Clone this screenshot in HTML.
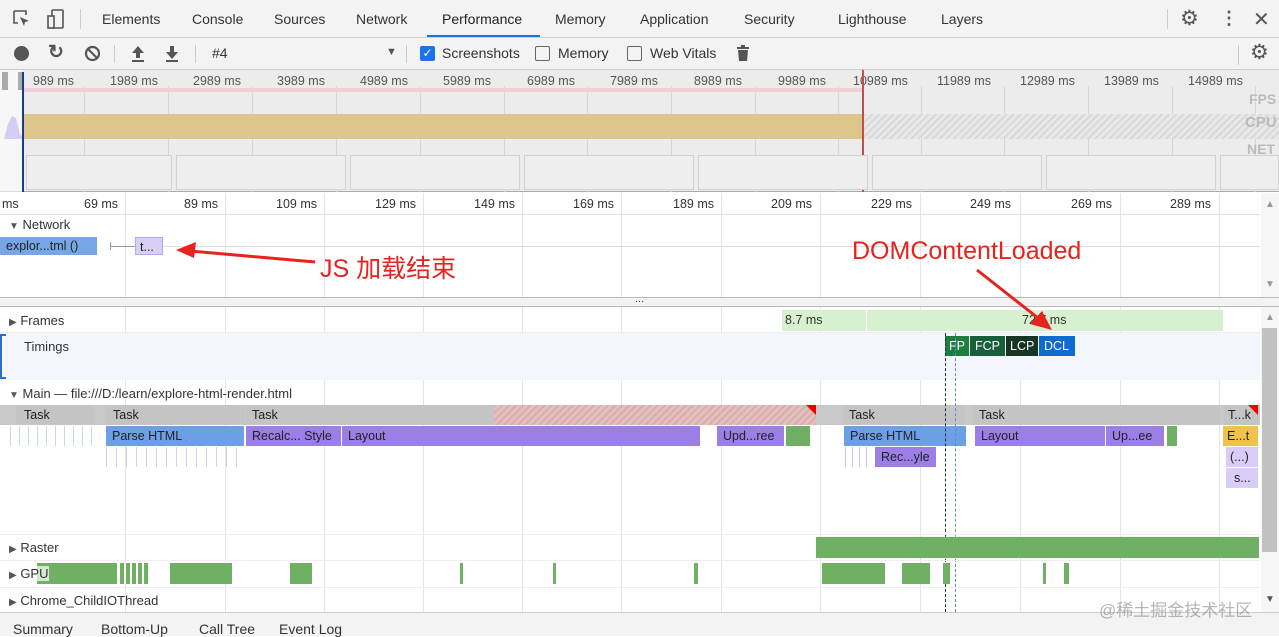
<!DOCTYPE html>
<html><head><meta charset="utf-8"><style>
*{box-sizing:border-box;margin:0;padding:0}
body{width:1279px;height:636px;overflow:hidden;background:#fff;font-family:"Liberation Sans",sans-serif;font-size:13px;color:#333;position:relative}
.a{position:absolute}
.t{position:absolute;white-space:nowrap}
.bar{position:absolute;height:20px;font-size:12.5px;line-height:20px;padding-left:6px;color:#222;overflow:hidden;white-space:nowrap}
.g{position:absolute;width:1px;background:#e4e4e4}
.og{position:absolute;width:1px;background:#d6d6d6;top:86px;height:106px}
.ol{position:absolute;top:74px;font-size:12.5px;color:#555}
.rl{position:absolute;top:197px;font-size:12.5px;color:#333}
.tri{font-size:10px;color:#555}
</style></head><body>
<!-- tab bar -->
<div class="a" style="left:0;top:0;width:1279px;height:38px;background:#f3f3f3;border-bottom:1px solid #d0d0d0"></div>
<svg class="a" style="left:12px;top:9px" width="20" height="20" viewBox="0 0 20 20"><path d="M2 2h12v4M2 2v12h4" fill="none" stroke="#555" stroke-width="1.6"/><path d="M8 8l9 4-4 1-1 4z" fill="#555"/></svg>
<svg class="a" style="left:45px;top:8px" width="22" height="22" viewBox="0 0 22 22"><rect x="7" y="2" width="11" height="18" rx="1" fill="none" stroke="#555" stroke-width="1.6"/><rect x="3" y="8" width="6" height="12" fill="#f3f3f3" stroke="#555" stroke-width="1.6"/></svg>
<div class="a" style="left:80px;top:9px;width:1px;height:20px;background:#ccc"></div>
<div class="t" style="left:102px;top:11px;font-size:14px">Elements</div>
<div class="t" style="left:192px;top:11px;font-size:14px">Console</div>
<div class="t" style="left:274px;top:11px;font-size:14px">Sources</div>
<div class="t" style="left:356px;top:11px;font-size:14px">Network</div>
<div class="t" style="left:442px;top:11px;font-size:14px;color:#222">Performance</div>
<div class="a" style="left:427px;top:35px;width:113px;height:2px;background:#1a73e8"></div>
<div class="t" style="left:555px;top:11px;font-size:14px">Memory</div>
<div class="t" style="left:640px;top:11px;font-size:14px">Application</div>
<div class="t" style="left:744px;top:11px;font-size:14px">Security</div>
<div class="t" style="left:838px;top:11px;font-size:14px">Lighthouse</div>
<div class="t" style="left:941px;top:11px;font-size:14px">Layers</div>
<div class="a" style="left:1167px;top:9px;width:1px;height:20px;background:#ccc"></div>
<div class="t" style="left:1180px;top:6px;font-size:21px;color:#555">⚙</div>
<div class="t" style="left:1220px;top:8px;font-size:18px;color:#555;font-weight:bold">⋮</div>
<div class="t" style="left:1253px;top:7px;font-size:20px;color:#555">✕</div>
<!-- toolbar -->
<div class="a" style="left:0;top:38px;width:1279px;height:32px;background:#f3f3f3;border-bottom:1px solid #ccc"></div>
<div class="a" style="left:14px;top:46px;width:15px;height:15px;border-radius:50%;background:#555"></div>
<div class="t" style="left:48px;top:41px;font-size:19px;color:#555;font-weight:bold">↻</div>
<svg class="a" style="left:84px;top:45px" width="17" height="17"><circle cx="8.5" cy="8.5" r="6.5" fill="none" stroke="#555" stroke-width="2.2"/><path d="M4 4l9 9" stroke="#555" stroke-width="2.2"/></svg>
<div class="a" style="left:114px;top:45px;width:1px;height:18px;background:#ccc"></div>
<svg class="a" style="left:130px;top:45px" width="16" height="18"><path d="M8 1l6 7H10v5H6V8H2z" fill="#555"/><rect x="2" y="15" width="12" height="2" fill="#555"/></svg>
<svg class="a" style="left:164px;top:45px" width="16" height="18"><path d="M8 14l6-7H10V1H6v6H2z" fill="#555"/><rect x="2" y="15" width="12" height="2" fill="#555"/></svg>
<div class="a" style="left:195px;top:45px;width:1px;height:18px;background:#ccc"></div>
<div class="t" style="left:212px;top:45px;font-size:14px">#4</div>
<div class="t" style="left:386px;top:46px;font-size:11px;color:#555">▼</div>
<div class="a" style="left:406px;top:45px;width:1px;height:18px;background:#ccc"></div>
<div class="a" style="left:420px;top:46px;width:15px;height:15px;border-radius:2px;background:#1a73e8;color:#fff;font-size:12px;line-height:15px;text-align:center">✓</div>
<div class="t" style="left:442px;top:45px;font-size:14px">Screenshots</div>
<div class="a" style="left:535px;top:46px;width:15px;height:15px;border-radius:2px;border:1.5px solid #666"></div>
<div class="t" style="left:558px;top:45px;font-size:14px">Memory</div>
<div class="a" style="left:627px;top:46px;width:15px;height:15px;border-radius:2px;border:1.5px solid #666"></div>
<div class="t" style="left:650px;top:45px;font-size:14px">Web Vitals</div>
<svg class="a" style="left:736px;top:44px" width="14" height="18"><rect x="1" y="3" width="12" height="2" fill="#555"/><rect x="5" y="1" width="4" height="2" fill="#555"/><path d="M2 6h10l-1 11H3z" fill="#555"/></svg>
<div class="a" style="left:1238px;top:45px;width:1px;height:20px;background:#ccc"></div>
<div class="t" style="left:1250px;top:40px;font-size:21px;color:#555">⚙</div>
<!-- overview -->
<div class="a" style="left:0;top:70px;width:1279px;height:122px;background:#ececec;border-bottom:1px solid #aaa"></div>
<div class="og" style="left:84px"></div><div class="og" style="left:168px"></div><div class="og" style="left:252px"></div><div class="og" style="left:336px"></div><div class="og" style="left:420px"></div><div class="og" style="left:504px"></div><div class="og" style="left:587px"></div><div class="og" style="left:671px"></div><div class="og" style="left:755px"></div><div class="og" style="left:838px"></div><div class="og" style="left:921px"></div><div class="og" style="left:1004px"></div><div class="og" style="left:1088px"></div><div class="og" style="left:1172px"></div><div class="og" style="left:1255px"></div>
<div class="ol" style="left:33px">989 ms</div><div class="ol" style="left:110px">1989 ms</div><div class="ol" style="left:193px">2989 ms</div><div class="ol" style="left:277px">3989 ms</div><div class="ol" style="left:360px">4989 ms</div><div class="ol" style="left:443px">5989 ms</div><div class="ol" style="left:527px">6989 ms</div><div class="ol" style="left:610px">7989 ms</div><div class="ol" style="left:694px">8989 ms</div><div class="ol" style="left:778px">9989 ms</div><div class="ol" style="left:853px">10989 ms</div><div class="ol" style="left:937px">11989 ms</div><div class="ol" style="left:1020px">12989 ms</div><div class="ol" style="left:1104px">13989 ms</div><div class="ol" style="left:1188px">14989 ms</div>
<div class="a" style="left:22px;top:88px;width:840px;height:4px;background:#f0cfd4"></div>
<div class="a" style="left:22px;top:114px;width:840px;height:25px;background:#dcc68c"></div>
<div class="a" style="left:864px;top:114px;width:415px;height:25px;background:repeating-linear-gradient(135deg,#d8d8d8 0 2px,#e8e8e8 2px 5px)"></div>
<svg class="a" style="left:4px;top:114px" width="20" height="25"><path d="M0 25L4 10 8 2 12 4 16 20 20 25z" fill="#9b7fe6"/></svg>
<div class="a" style="left:0;top:70px;width:22px;height:122px;background:rgba(255,255,255,.6)"></div>
<div class="a" style="left:2px;top:72px;width:6px;height:18px;background:#aaa"></div>
<div class="a" style="left:18px;top:72px;width:6px;height:18px;background:#aaa"></div>
<div class="a" style="left:22px;top:72px;width:2px;height:120px;background:#1a3b8a"></div>
<div class="a" style="left:862px;top:70px;width:2px;height:122px;background:#c0504d"></div>
<div class="t" style="left:1249px;top:91px;font-size:14px;font-weight:bold;color:#bbb">FPS</div>
<div class="t" style="left:1245px;top:114px;font-size:15px;font-weight:bold;color:#bbb">CPU</div>
<div class="t" style="left:1247px;top:141px;font-size:14px;font-weight:bold;color:#bbb">NET</div>
<div class="a" style="left:26px;top:155px;width:146px;height:35px;border:1px solid #d2d2d2;background:#eee"></div>
<div class="a" style="left:176px;top:155px;width:170px;height:35px;border:1px solid #d2d2d2;background:#eee"></div>
<div class="a" style="left:350px;top:155px;width:170px;height:35px;border:1px solid #d2d2d2;background:#eee"></div>
<div class="a" style="left:524px;top:155px;width:170px;height:35px;border:1px solid #d2d2d2;background:#eee"></div>
<div class="a" style="left:698px;top:155px;width:170px;height:35px;border:1px solid #d2d2d2;background:#eee"></div>
<div class="a" style="left:872px;top:155px;width:170px;height:35px;border:1px solid #d2d2d2;background:#eee"></div>
<div class="a" style="left:1046px;top:155px;width:170px;height:35px;border:1px solid #d2d2d2;background:#eee"></div>
<div class="a" style="left:1220px;top:155px;width:59px;height:35px;border:1px solid #d2d2d2;background:#eee"></div>
<!-- grid lines detail -->
<div class="g" style="left:125px;top:193px;height:104px"></div><div class="g" style="left:225px;top:193px;height:104px"></div><div class="g" style="left:324px;top:193px;height:104px"></div><div class="g" style="left:423px;top:193px;height:104px"></div><div class="g" style="left:522px;top:193px;height:104px"></div><div class="g" style="left:621px;top:193px;height:104px"></div><div class="g" style="left:721px;top:193px;height:104px"></div><div class="g" style="left:820px;top:193px;height:104px"></div><div class="g" style="left:920px;top:193px;height:104px"></div><div class="g" style="left:1020px;top:193px;height:104px"></div><div class="g" style="left:1120px;top:193px;height:104px"></div><div class="g" style="left:1219px;top:193px;height:104px"></div>
<div class="a" style="left:0;top:214px;width:1260px;height:1px;background:#e0e0e0"></div>
<div class="rl" style="left:2px">ms</div><div class="rl" style="left:84px">69 ms</div><div class="rl" style="left:184px">89 ms</div><div class="rl" style="left:276px">109 ms</div><div class="rl" style="left:375px">129 ms</div><div class="rl" style="left:474px">149 ms</div><div class="rl" style="left:573px">169 ms</div><div class="rl" style="left:673px">189 ms</div><div class="rl" style="left:771px">209 ms</div><div class="rl" style="left:871px">229 ms</div><div class="rl" style="left:970px">249 ms</div><div class="rl" style="left:1071px">269 ms</div><div class="rl" style="left:1170px">289 ms</div>
<div class="t" style="left:9px;top:217px;font-size:13px"><span class="tri">▼</span> Network</div>
<div class="bar" style="left:0;top:237px;width:97px;height:18px;line-height:18px;background:#76a6e6;padding-left:6px">explor...tml ()</div>
<div class="a" style="left:110px;top:246px;width:25px;height:1px;background:#999"></div>
<div class="a" style="left:110px;top:242px;width:1px;height:8px;background:#999"></div>
<div class="bar" style="left:135px;top:237px;width:28px;height:18px;line-height:18px;background:#d8cff6;border:1px solid #b6a6ee;padding-left:4px">t...</div>
<div class="a" style="left:163px;top:246px;width:1097px;height:1px;background:#ddd"></div>
<div class="a" style="left:1261px;top:193px;width:18px;height:104px;background:#f6f6f6"></div>
<div class="t" style="left:1265px;top:199px;font-size:10px;color:#999">▲</div>
<div class="t" style="left:1265px;top:279px;font-size:10px;color:#999">▼</div>
<!-- splitter -->
<div class="a" style="left:0;top:297px;width:1279px;height:10px;background:#f3f3f3;border-top:1px solid #bbb;border-bottom:1px solid #bbb"></div>
<div class="t" style="left:635px;top:293px;font-size:11px;color:#333">...</div>
<!-- flame grid -->
<div class="g" style="left:125px;top:307px;height:305px"></div><div class="g" style="left:225px;top:307px;height:305px"></div><div class="g" style="left:324px;top:307px;height:305px"></div><div class="g" style="left:423px;top:307px;height:305px"></div><div class="g" style="left:522px;top:307px;height:305px"></div><div class="g" style="left:621px;top:307px;height:305px"></div><div class="g" style="left:721px;top:307px;height:305px"></div><div class="g" style="left:820px;top:307px;height:305px"></div><div class="g" style="left:920px;top:307px;height:305px"></div><div class="g" style="left:1020px;top:307px;height:305px"></div><div class="g" style="left:1120px;top:307px;height:305px"></div><div class="g" style="left:1219px;top:307px;height:305px"></div>
<!-- frames -->
<div class="t" style="left:9px;top:313px"><span class="tri">▶</span> Frames</div>
<div class="a" style="left:782px;top:310px;width:84px;height:21px;background:#d6f0d0"></div>
<div class="a" style="left:867px;top:310px;width:356px;height:21px;background:#d6f0d0"></div>
<div class="t" style="left:785px;top:313px;font-size:12.5px">8.7 ms</div>
<div class="t" style="left:1022px;top:313px;font-size:12.5px">72.7 ms</div>
<div class="a" style="left:0;top:332px;width:1260px;height:1px;background:#eee"></div>
<!-- timings -->
<div class="a" style="left:0;top:333px;width:1260px;height:47px;background:#f3f7fd"></div>
<div class="a" style="left:0;top:334px;width:6px;height:45px;border:2px solid #2f6cc6;border-right:none"></div>
<div class="t" style="left:24px;top:339px">Timings</div>
<div class="bar" style="left:945px;top:336px;width:24px;background:#1e7e3e;color:#fff;padding-left:4px">FP</div>
<div class="bar" style="left:970px;top:336px;width:35px;background:#17603a;color:#fff;padding-left:5px">FCP</div>
<div class="bar" style="left:1006px;top:336px;width:32px;background:#183424;color:#fff;padding-left:4px">LCP</div>
<div class="bar" style="left:1039px;top:336px;width:36px;background:#0c6ccf;color:#fff;padding-left:5px">DCL</div>
<!-- main -->
<div class="t" style="left:9px;top:386px"><span class="tri">▼</span> Main — file:///D:/learn/explore-html-render.html</div>
<div class="a" style="left:0;top:405px;width:1260px;height:20px;background:#c8c8c8"></div>
<div class="bar" style="left:16px;top:405px;width:78px;background:#c4c4c4;padding-left:8px">Task</div>
<div class="bar" style="left:105px;top:405px;width:140px;background:#c4c4c4;padding-left:8px">Task</div>
<div class="bar" style="left:246px;top:405px;width:570px;background:#c4c4c4;padding-left:6px">Task</div>
<div class="a" style="left:494px;top:405px;width:322px;height:20px;background:repeating-linear-gradient(135deg,#e8a6a6 0 2px,#d9c3c3 2px 5px)"></div>
<svg class="a" style="left:806px;top:405px" width="10" height="10"><path d="M0 0h10v10z" fill="#e00"/></svg>
<div class="bar" style="left:843px;top:405px;width:122px;background:#c4c4c4">Task</div>
<div class="bar" style="left:973px;top:405px;width:247px;background:#c4c4c4">Task</div>
<div class="bar" style="left:1224px;top:405px;width:34px;background:#c4c4c4;padding-left:4px">T...k</div>
<svg class="a" style="left:1248px;top:405px" width="10" height="10"><path d="M0 0h10v10z" fill="#e00"/></svg>
<div class="bar" style="left:106px;top:426px;width:138px;background:#6d9fe4">Parse HTML</div>
<div class="bar" style="left:246px;top:426px;width:95px;background:#9b7fe6">Recalc... Style</div>
<div class="bar" style="left:342px;top:426px;width:358px;background:#9b7fe6">Layout</div>
<div class="bar" style="left:717px;top:426px;width:67px;background:#9b7fe6">Upd...ree</div>
<div class="a" style="left:786px;top:426px;width:24px;height:20px;background:#6fb064"></div>
<div class="bar" style="left:844px;top:426px;width:122px;background:#6d9fe4">Parse HTML</div>
<div class="bar" style="left:975px;top:426px;width:130px;background:#9b7fe6">Layout</div>
<div class="bar" style="left:1106px;top:426px;width:58px;background:#9b7fe6">Up...ee</div>
<div class="a" style="left:1167px;top:426px;width:10px;height:20px;background:#6fb064"></div>
<div class="bar" style="left:1223px;top:426px;width:35px;background:#f0c24c;padding-left:4px">E...t</div>
<div class="a" style="left:10px;top:426px;width:86px;height:20px;background:repeating-linear-gradient(90deg,#c8d6ee 0 1px,transparent 1px 9px)"></div>
<div class="a" style="left:106px;top:447px;width:138px;height:20px;background:repeating-linear-gradient(90deg,#c8d6ee 0 1px,transparent 1px 10px)"></div>
<div class="a" style="left:845px;top:447px;width:28px;height:20px;background:repeating-linear-gradient(90deg,#ccc6ee 0 1px,transparent 1px 7px)"></div>
<div class="bar" style="left:875px;top:447px;width:61px;background:#9b7fe6">Rec...yle</div>
<div class="bar" style="left:1226px;top:447px;width:32px;background:#d9ccf6;padding-left:4px">(...)</div>
<div class="bar" style="left:1226px;top:468px;width:32px;background:#d9ccf6;padding-left:8px">s...</div>
<div class="a" style="left:945px;top:333px;width:1px;height:279px;border-left:1px dashed #234"></div>
<div class="a" style="left:955px;top:333px;width:1px;height:279px;border-left:1px dashed #5b8ed8"></div>
<div class="a" style="left:0;top:534px;width:1260px;height:1px;background:#eee"></div>
<!-- raster -->
<div class="t" style="left:9px;top:540px"><span class="tri">▶</span> Raster</div>
<div class="a" style="left:816px;top:537px;width:443px;height:21px;background:#6fb064"></div>
<div class="a" style="left:0;top:560px;width:1260px;height:1px;background:#eee"></div>
<!-- gpu -->
<div class="a" style="left:37px;top:563px;width:80px;height:21px;background:#6fb064"></div>
<div class="a" style="left:120px;top:563px;width:30px;height:21px;background:repeating-linear-gradient(90deg,#6fb064 0 4px,#fff 4px 6px)"></div>
<div class="a" style="left:170px;top:563px;width:62px;height:21px;background:#6fb064"></div>
<div class="a" style="left:290px;top:563px;width:22px;height:21px;background:#6fb064"></div>
<div class="a" style="left:460px;top:563px;width:3px;height:21px;background:#6fb064"></div>
<div class="a" style="left:553px;top:563px;width:3px;height:21px;background:#6fb064"></div>
<div class="a" style="left:694px;top:563px;width:4px;height:21px;background:#6fb064"></div>
<div class="a" style="left:822px;top:563px;width:63px;height:21px;background:#6fb064"></div>
<div class="a" style="left:902px;top:563px;width:28px;height:21px;background:#6fb064"></div>
<div class="a" style="left:943px;top:563px;width:7px;height:21px;background:#6fb064"></div>
<div class="a" style="left:1043px;top:563px;width:3px;height:21px;background:#6fb064"></div>
<div class="a" style="left:1064px;top:563px;width:5px;height:21px;background:#6fb064"></div>
<div class="t" style="left:9px;top:566px;background:rgba(255,255,255,.7)"><span class="tri">▶</span> GPU</div>
<div class="a" style="left:0;top:587px;width:1260px;height:1px;background:#eee"></div>
<div class="t" style="left:9px;top:593px"><span class="tri">▶</span> Chrome_ChildIOThread</div>
<!-- scrollbar -->
<div class="a" style="left:1261px;top:307px;width:18px;height:305px;background:#f6f6f6"></div>
<div class="a" style="left:1262px;top:328px;width:15px;height:224px;background:#c1c1c1"></div>
<div class="t" style="left:1265px;top:312px;font-size:10px;color:#999">▲</div>
<div class="t" style="left:1265px;top:594px;font-size:10px;color:#555">▼</div>
<!-- bottom tabs -->
<div class="a" style="left:0;top:612px;width:1279px;height:24px;background:#f3f3f3;border-top:1px solid #ccc"></div>
<div class="t" style="left:13px;top:621px;font-size:14px">Summary</div>
<div class="t" style="left:101px;top:621px;font-size:14px">Bottom-Up</div>
<div class="t" style="left:199px;top:621px;font-size:14px">Call Tree</div>
<div class="t" style="left:279px;top:621px;font-size:14px">Event Log</div>
<div class="t" style="left:1099px;top:596px;font-size:17px;color:rgba(120,120,120,.55);font-family:'Liberation Sans','Noto Sans CJK SC',sans-serif">@稀土掘金技术社区</div>
<!-- annotations -->
<div class="t" style="left:320px;top:249px;font-size:25px;color:#e8231d;font-family:'Liberation Sans','Noto Sans CJK SC',sans-serif">JS 加载结束</div>
<div class="t" style="left:852px;top:237px;font-size:25px;color:#e8231d">DOMContentLoaded</div>
<svg class="a" style="left:0;top:0" width="1279" height="636"><path d="M315 262L190 251" stroke="#e8231d" stroke-width="3"/><path d="M176 250l20-8-2 16z" fill="#e8231d"/><path d="M977 270L1038 318" stroke="#e8231d" stroke-width="3"/><path d="M1052 330l-22-6 12-13z" fill="#e8231d"/></svg>
</body></html>
